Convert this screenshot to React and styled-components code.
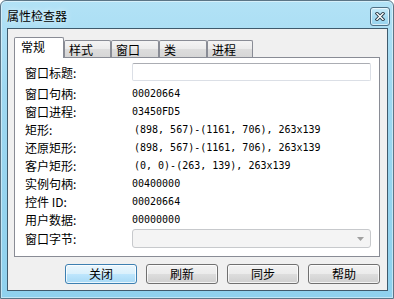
import React from "react";
import styled, { createGlobalStyle } from "styled-components";

const GlobalStyle = createGlobalStyle`
  html, body {
    margin: 0;
    padding: 0;
    background: #ffffff;
  }
  * {
    box-sizing: border-box;
  }
`;

const CJK = `"Noto Sans CJK SC", "Noto Sans", sans-serif`;
const MONO = `"DejaVu Sans Mono", "Liberation Mono", "Noto Sans CJK SC", monospace`;

// Aero frame
const Frame = styled.div`
  width: 394px;
  height: 299px;
  border: 1px solid #5b7586;
  border-radius: 6px 6px 0 0;
  background: linear-gradient(to bottom, #b2e2f6 0%, #9fd8f1 30%, #95d3ee 70%, #8fd1ee 100%);
  box-shadow: inset 0 0 0 1px rgba(255, 255, 255, 0.45);
  display: flex;
  flex-direction: column;
  font-family: ${CJK};
  color: #000;
`;

const TitleBar = styled.div`
  height: 27px;
  display: flex;
  align-items: flex-start;
  justify-content: space-between;
  padding: 6px 3px 0 6px;
`;

const Caption = styled.div`
  font-size: 12px;
  line-height: 18px;
  text-shadow: 0 0 6px rgba(255, 255, 255, 0.9);
`;

const CloseBtn = styled.div`
  width: 20px;
  height: 19px;
  border: 1px solid #4f7086;
  border-radius: 3px;
  background: linear-gradient(to bottom, #c9ebf9 0%, #a9dcf2 50%, #97d3ee 100%);
  box-shadow: inset 0 0 0 1px rgba(255, 255, 255, 0.6);
  display: flex;
  align-items: center;
  justify-content: center;
`;

const Client = styled.div`
  margin: 0 5px 0 6px;
  border: 1px solid #3f5a6c;
  background: #f0f0f0;
  height: 263px;
  display: flex;
  flex-direction: column;
  padding: 8px 7px 6px 6px;
`;

const TabStrip = styled.div`
  height: 21px;
  display: flex;
  align-items: flex-end;
  margin-bottom: -1px;
`;

const Tab = styled.div`
  width: ${(p) => p.$w}px;
  height: ${(p) => (p.$active ? 21 : 17)}px;
  margin-bottom: ${(p) => (p.$active ? 0 : 1)}px;
  border: 1px solid #898c95;
  border-bottom: none;
  border-radius: 2px 2px 0 0;
  background: ${(p) =>
    p.$active ? "#ffffff" : "linear-gradient(to bottom, #f4f4f4 0%, #ebebeb 50%, #dddddd 51%, #d6d6d6 100%)"};
  position: ${(p) => (p.$active ? "relative" : "static")};
  z-index: ${(p) => (p.$active ? 1 : "auto")};
  font-size: 12px;
  line-height: ${(p) => (p.$active ? 16 : 15)}px;
  padding: 1px 0 0 ${(p) => (p.$active ? 6 : 4)}px;
`;

const Panel = styled.div`
  height: 200px;
  border: 1px solid #898c95;
  background: #ffffff;
  padding: 5px 8px 0 10px;
  display: flex;
  flex-direction: column;
`;

const Row = styled.div`
  display: flex;
  align-items: center;
  height: ${(p) => p.$h || 18}px;
  margin-top: ${(p) => p.$mt || 0}px;
`;

const Label = styled.div`
  width: 107px;
  font-size: 12px;
  white-space: nowrap;
`;

const Value = styled.div`
  font-family: ${MONO};
  font-size: 10px;
  white-space: pre;
  padding-left: ${(p) => (p.$indent ? 2 : 0)}px;
`;

const TextBox = styled.div`
  flex: 1;
  height: 18px;
  background: #ffffff;
  border: 1px solid #dbdfe6;
  border-top-color: #abadb3;
  border-radius: 2px;
`;

const Combo = styled.div`
  flex: 1;
  height: 19px;
  background: #f4f4f4;
  border: 1px solid #c7c9cc;
  border-radius: 3px;
  display: flex;
  align-items: center;
  justify-content: flex-end;
  padding-right: 6px;
`;

const ButtonRow = styled.div`
  display: flex;
  justify-content: flex-end;
  gap: 9px;
  margin-top: 7px;
`;

const Button = styled.div`
  width: 72px;
  height: 20px;
  border: 1px solid ${(p) => (p.$default ? "#3c7fb1" : "#707070")};
  border-radius: 3px;
  background: ${(p) =>
    p.$default
      ? "linear-gradient(to bottom, #eaf6fd 0%, #d9f0fc 50%, #bee6fd 51%, #a7d9f5 100%)"
      : "linear-gradient(to bottom, #f2f2f2 0%, #ebebeb 50%, #dddddd 51%, #cfcfcf 100%)"};
  box-shadow: inset 0 0 0 1px rgba(255, 255, 255, 0.75);
  font-size: 12px;
  line-height: 18px;
  text-align: center;
`;

const tabs = [
  { name: "常规", w: 50 },
  { name: "样式", w: 47 },
  { name: "窗口", w: 48 },
  { name: "类", w: 48 },
  { name: "进程", w: 46 },
];

const fields = [
  ["窗口进程:", "03450FD5"],
  ["矩形:", "(898, 567)-(1161, 706), 263x139", true],
  ["还原矩形:", "(898, 567)-(1161, 706), 263x139", true],
  ["客户矩形:", "(0, 0)-(263, 139), 263x139", true],
  ["实例句柄:", "00400000"],
  ["控件 ID:", "00020664"],
  ["用户数据:", "00000000"],
];

const CloseGlyph = () => (
  <svg width="10" height="9" viewBox="0 0 10 9">
    <path d="M2 1.5 L8 7.5 M8 1.5 L2 7.5" stroke="#2c3e4c" strokeWidth="3.2" strokeLinecap="square" />
    <path d="M2 1.5 L8 7.5 M8 1.5 L2 7.5" stroke="#ffffff" strokeWidth="1.4" strokeLinecap="square" />
  </svg>
);

const ComboArrow = () => (
  <svg width="7" height="4" viewBox="0 0 7 4">
    <path d="M0 0 H7 L3.5 4 Z" fill="#a0a0a0" />
  </svg>
);

export default function App() {
  return (
    <>
      <GlobalStyle />
      <Frame>
        <TitleBar>
          <Caption>属性检查器</Caption>
          <CloseBtn>
            <CloseGlyph />
          </CloseBtn>
        </TitleBar>
        <Client>
          <TabStrip>
            {tabs.map((t, i) => (
              <Tab key={t.name} $w={t.w} $active={i === 0}>
                {t.name}
              </Tab>
            ))}
          </TabStrip>
          <Panel>
            <Row>
              <Label>窗口标题:</Label>
              <TextBox />
            </Row>
            <Row $mt={3}>
              <Label>窗口句柄:</Label>
              <Value>00020664</Value>
            </Row>
            {fields.map(([k, v, indent]) => (
              <Row key={k}>
                <Label>{k}</Label>
                <Value $indent={indent}>{v}</Value>
              </Row>
            ))}
            <Row $h={19} $mt={1}>
              <Label>窗口字节:</Label>
              <Combo>
                <ComboArrow />
              </Combo>
            </Row>
          </Panel>
          <ButtonRow>
            <Button $default>关闭</Button>
            <Button>刷新</Button>
            <Button>同步</Button>
            <Button>帮助</Button>
          </ButtonRow>
        </Client>
      </Frame>
    </>
  );
}
